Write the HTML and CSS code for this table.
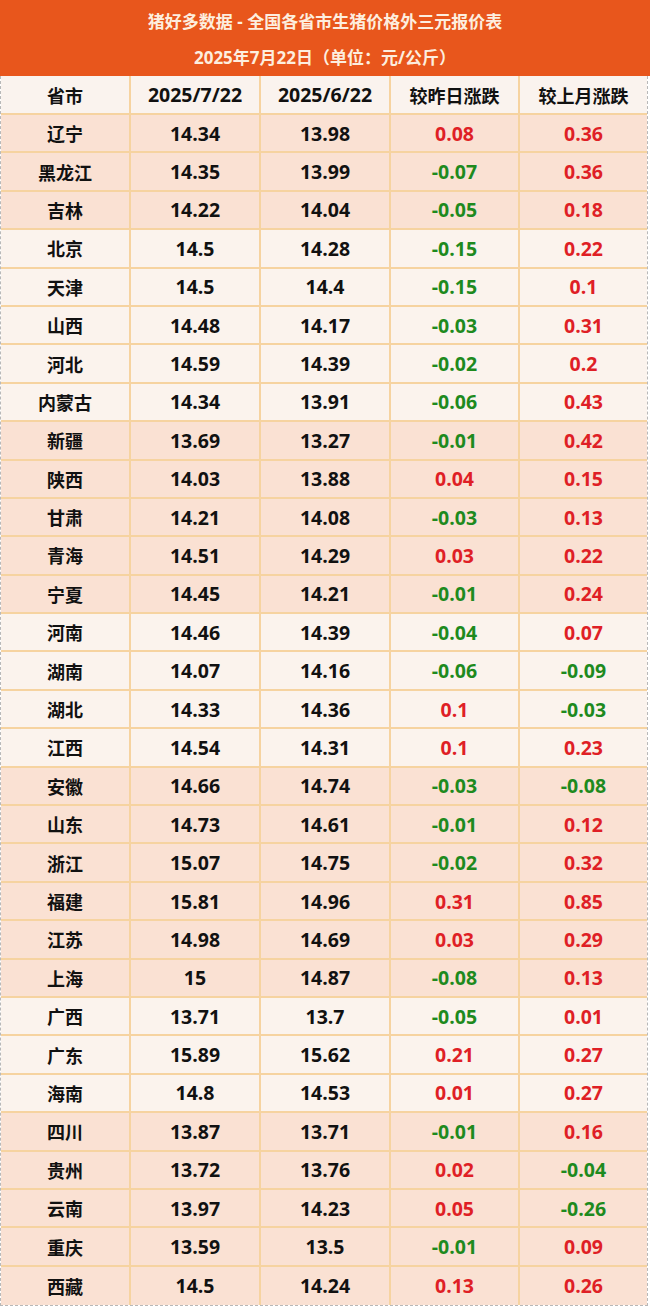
FILE: index.html
```html
<!DOCTYPE html>
<html lang="zh-CN">
<head>
<meta charset="utf-8">
<title>猪好多数据</title>
<link rel="stylesheet" href="styles.css">
</head>
<body>
<div class="page">
  <header class="banner">
    <div class="banner-line">猪好多数据 - 全国各省市生猪价格外三元报价表</div>
    <div class="banner-line">2025年7月22日（单位：元/公斤）</div>
  </header>
  <div class="table">
    <div class="row head"><div>省市</div><div class="num">2025/7/22</div><div class="num">2025/6/22</div><div>较昨日涨跌</div><div>较上月涨跌</div></div>
    <div class="row pink"><div>辽宁</div><div>14.34</div><div>13.98</div><div class="up">0.08</div><div class="up">0.36</div></div>
    <div class="row pink"><div>黑龙江</div><div>14.35</div><div>13.99</div><div class="dn">-0.07</div><div class="up">0.36</div></div>
    <div class="row pink"><div>吉林</div><div>14.22</div><div>14.04</div><div class="dn">-0.05</div><div class="up">0.18</div></div>
    <div class="row cream"><div>北京</div><div>14.5</div><div>14.28</div><div class="dn">-0.15</div><div class="up">0.22</div></div>
    <div class="row cream"><div>天津</div><div>14.5</div><div>14.4</div><div class="dn">-0.15</div><div class="up">0.1</div></div>
    <div class="row cream"><div>山西</div><div>14.48</div><div>14.17</div><div class="dn">-0.03</div><div class="up">0.31</div></div>
    <div class="row cream"><div>河北</div><div>14.59</div><div>14.39</div><div class="dn">-0.02</div><div class="up">0.2</div></div>
    <div class="row cream"><div>内蒙古</div><div>14.34</div><div>13.91</div><div class="dn">-0.06</div><div class="up">0.43</div></div>
    <div class="row pink"><div>新疆</div><div>13.69</div><div>13.27</div><div class="dn">-0.01</div><div class="up">0.42</div></div>
    <div class="row pink"><div>陕西</div><div>14.03</div><div>13.88</div><div class="up">0.04</div><div class="up">0.15</div></div>
    <div class="row pink"><div>甘肃</div><div>14.21</div><div>14.08</div><div class="dn">-0.03</div><div class="up">0.13</div></div>
    <div class="row pink"><div>青海</div><div>14.51</div><div>14.29</div><div class="up">0.03</div><div class="up">0.22</div></div>
    <div class="row pink"><div>宁夏</div><div>14.45</div><div>14.21</div><div class="dn">-0.01</div><div class="up">0.24</div></div>
    <div class="row cream"><div>河南</div><div>14.46</div><div>14.39</div><div class="dn">-0.04</div><div class="up">0.07</div></div>
    <div class="row cream"><div>湖南</div><div>14.07</div><div>14.16</div><div class="dn">-0.06</div><div class="dn">-0.09</div></div>
    <div class="row cream"><div>湖北</div><div>14.33</div><div>14.36</div><div class="up">0.1</div><div class="dn">-0.03</div></div>
    <div class="row cream"><div>江西</div><div>14.54</div><div>14.31</div><div class="up">0.1</div><div class="up">0.23</div></div>
    <div class="row pink"><div>安徽</div><div>14.66</div><div>14.74</div><div class="dn">-0.03</div><div class="dn">-0.08</div></div>
    <div class="row pink"><div>山东</div><div>14.73</div><div>14.61</div><div class="dn">-0.01</div><div class="up">0.12</div></div>
    <div class="row pink"><div>浙江</div><div>15.07</div><div>14.75</div><div class="dn">-0.02</div><div class="up">0.32</div></div>
    <div class="row pink"><div>福建</div><div>15.81</div><div>14.96</div><div class="up">0.31</div><div class="up">0.85</div></div>
    <div class="row pink"><div>江苏</div><div>14.98</div><div>14.69</div><div class="up">0.03</div><div class="up">0.29</div></div>
    <div class="row pink"><div>上海</div><div>15</div><div>14.87</div><div class="dn">-0.08</div><div class="up">0.13</div></div>
    <div class="row cream"><div>广西</div><div>13.71</div><div>13.7</div><div class="dn">-0.05</div><div class="up">0.01</div></div>
    <div class="row cream"><div>广东</div><div>15.89</div><div>15.62</div><div class="up">0.21</div><div class="up">0.27</div></div>
    <div class="row cream"><div>海南</div><div>14.8</div><div>14.53</div><div class="up">0.01</div><div class="up">0.27</div></div>
    <div class="row pink"><div>四川</div><div>13.87</div><div>13.71</div><div class="dn">-0.01</div><div class="up">0.16</div></div>
    <div class="row pink"><div>贵州</div><div>13.72</div><div>13.76</div><div class="up">0.02</div><div class="dn">-0.04</div></div>
    <div class="row pink"><div>云南</div><div>13.97</div><div>14.23</div><div class="up">0.05</div><div class="dn">-0.26</div></div>
    <div class="row pink"><div>重庆</div><div>13.59</div><div>13.5</div><div class="dn">-0.01</div><div class="up">0.09</div></div>
    <div class="row pink last"><div>西藏</div><div>14.5</div><div>14.24</div><div class="up">0.13</div><div class="up">0.26</div></div>
  </div>
</div>
</body>
</html>
```
FILE: styles.css
```css
html, body {
  margin: 0;
  padding: 0;
  background: #ffffff;
}
.page {
  width: 650px;
  font-family: "Open Sans", "Noto Sans CJK SC", sans-serif;
  font-weight: 700;
  color: #111111;
}
.banner {
  background: #e8561c;
  height: 76px;
  box-sizing: border-box;
  padding-top: 4px;
  display: flex;
  flex-direction: column;
  color: #fdeedf;
  font-size: 17px;
  text-align: center;
}
.banner-line {
  height: 36px;
  line-height: 36px;
}
.table {
  width: 648px;
  border-left: 1px dashed #b8b8b8;
  border-right: 1px dashed #b8b8b8;
  border-bottom: 1px dashed #b8b8b8;
  box-sizing: border-box;
}
.row {
  display: grid;
  grid-template-columns: 130px 130px 130px 129px 1fr;
  height: 38.4px;
  box-sizing: border-box;
  border-bottom: 2px solid #f6d3a0;
  font-size: 18px;
}
.row.head {
  height: 39px;
  background: #faf3ee;
}
.row.last {
  border-bottom: none;
}
.row.pink {
  background: #fae1d3;
}
.row.cream {
  background: #fbf3ed;
}
.row > div {
  display: flex;
  align-items: center;
  justify-content: center;
  border-right: 2px solid #f6d3a0;
}
.row > div:last-child {
  border-right: none;
}
.row:not(.head) > div:not(:first-child),
.row.head > .num {
  font-size: 19.5px;
}
.up {
  color: #df1f26;
}
.dn {
  color: #1e8a1e;
}
```
